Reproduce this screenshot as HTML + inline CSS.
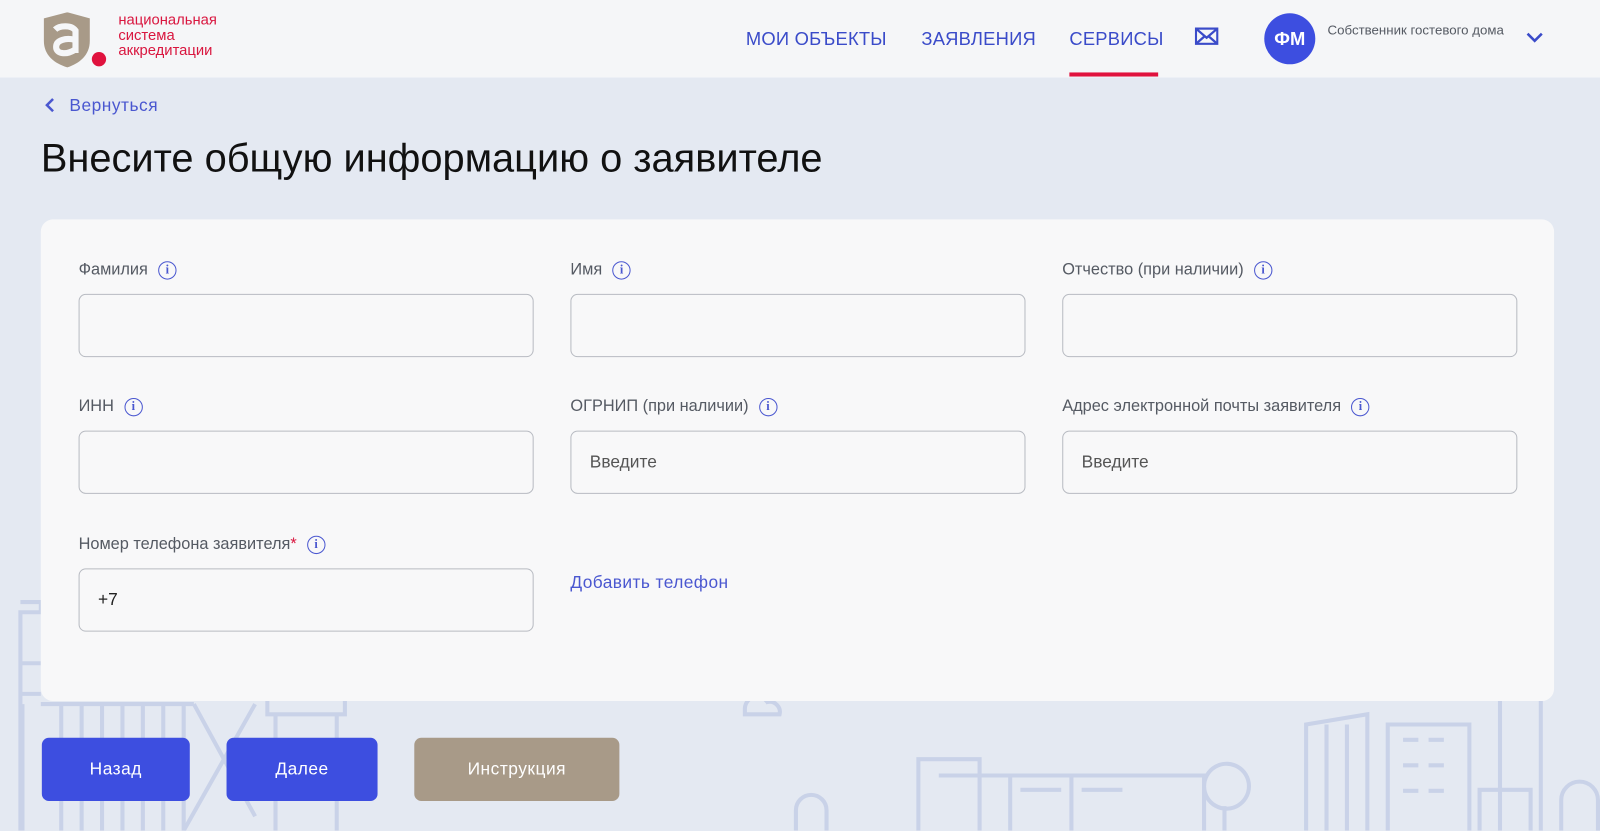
<!DOCTYPE html>
<html><head><meta charset="utf-8">
<style>
*{box-sizing:border-box;margin:0;padding:0}
body{width:1600px;height:814px;overflow:hidden;background:#e4e9f2;font-family:"Liberation Sans",sans-serif;position:relative}
#w{position:absolute;left:0;top:0;width:1568px;height:798px;transform:scale(1.0204);transform-origin:0 0}
.hdr{position:absolute;left:0;top:0;width:1600px;height:76px;background:#f5f6f8}
.nav{position:absolute;top:28px;font-size:18px;color:#3a4bc9;letter-spacing:.2px}
.card{position:absolute;left:40px;top:215px;width:1483px;height:472px;background:#f8f8f9;border-radius:12px}
.lbl{position:absolute;font-size:16px;color:#555a63}
.ic{display:inline-block;width:18px;height:18px;border:1.5px solid #4a57d0;border-radius:50%;color:#4a57d0;font-size:12px;font-weight:bold;text-align:center;line-height:15px;vertical-align:1px;margin-left:10px;font-family:"Liberation Serif",serif}
.inp{position:absolute;width:446px;height:62px;border:1px solid #b8bbc2;border-radius:7px;background:#f8f8f9;font-size:17px;color:#555;padding:20px 18px}
.btn{position:absolute;top:723px;height:62px;border-radius:7px;color:#fff;font-size:17px;text-align:center;line-height:62px;letter-spacing:.5px}
</style></head><body><div id="w">
<svg style="position:absolute;left:0;top:560px" width="1600" height="254" fill="none" stroke="#c9d2e8" stroke-width="4">
<path d="M20 254V40h20V30h-20M20 90h20M20 120h20M22 254V130"/>
<path d="M40 130h150M60 130v124M80 130v124M100 130v124M120 130v124M140 130v124M160 130v124M180 130v124"/>
<path d="M190 130l60 110M180 254L250 130"/>
<path d="M270 254V140h60v114M262 140h76v-15h-76z M300 125v-15"/>
<path d="M730 134a12 12 0 0 1 22-6a10 10 0 0 1 12 12h-34z"/>
<path d="M780 254v-20a15 15 0 0 1 30 0v20"/>
<path d="M900 254v-70h60v70M920 200h260v54M990 200v54M1050 200v54M1000 214h40M1060 214h40"/>
<path d="M1180 210a22 22 0 1 1 0 1M1200 230v24"/>
<path d="M1280 254V150l60-10v114M1300 150v104M1320 150v104"/>
<path d="M1360 254V150h80v104M1375 165h15M1400 165h15M1375 190h15M1400 190h15M1375 215h15M1400 215h15"/>
<path d="M1450 254v-40h50v40M1470 254V100h40v154"/>
<path d="M1530 254v-30a18 18 0 0 1 36 0v30"/>
</svg>
<div class="hdr">
<svg style="position:absolute;left:40px;top:12px" width="66" height="56" viewBox="0 0 66 56">
<path d="M3 6L26 0l22 6v22c0 14-10 22-22 26C13 50 3 42 3 28z" fill="#a89a88"/>
<path d="M14 17c4-4 16-5 20 1v22M33 27c-8-2-18 0-18 7s10 8 18 3" stroke="#f5f6f8" stroke-width="6" fill="none"/>
<circle cx="57" cy="46" r="7" fill="#e0123e"/>
</svg>
<div style="position:absolute;left:116px;top:13px;font-size:14.5px;line-height:15px;color:#d9163f">национальная<br>система<br>аккредитации</div>
<div class="nav" style="left:731px">МОИ ОБЪЕКТЫ</div>
<div class="nav" style="left:903px">ЗАЯВЛЕНИЯ</div>
<div class="nav" style="left:1048px">СЕРВИСЫ</div>
<div style="position:absolute;left:1048px;top:71px;width:87px;height:4px;background:#e0123e"></div>
<svg style="position:absolute;left:1171px;top:27px" width="23" height="17" viewBox="0 0 23 17" fill="none" stroke="#3a4bc9" stroke-width="2.2"><rect x="1" y="1" width="21" height="15"/><path d="M1 1l10.5 9L22 1M1 16l8-7M22 16l-8-7"/></svg>
<div style="position:absolute;left:1239px;top:13px;width:50px;height:50px;border-radius:50%;background:#3d4ee0;color:#fff;font-weight:bold;font-size:18px;text-align:center;line-height:50px">ФМ</div>
<div style="position:absolute;left:1301px;top:22px;font-size:13px;color:#555a63">Собственник гостевого дома</div>
<svg style="position:absolute;left:1495px;top:31px" width="18" height="12" fill="none" stroke="#3a4bc9" stroke-width="2.5"><path d="M2 2l7 7 7-7"/></svg>
</div>
<svg style="position:absolute;left:43px;top:95px" width="12" height="16" fill="none" stroke="#4a57d0" stroke-width="2.5"><path d="M9 2L3 8l6 6"/></svg>
<div style="position:absolute;left:68px;top:94px;font-size:17px;color:#4a57d0;letter-spacing:.5px">Вернуться</div>
<div style="position:absolute;left:40px;top:134px;font-size:39px;color:#111">Внесите общую информацию о заявителе</div>
<div class="card"></div>
<div class="lbl" style="left:77px;top:256px">Фамилия<span class="ic">i</span></div>
<div class="lbl" style="left:559px;top:256px">Имя<span class="ic">i</span></div>
<div class="lbl" style="left:1041px;top:256px">Отчество (при наличии)<span class="ic">i</span></div>
<div class="inp" style="left:77px;top:288px"></div>
<div class="inp" style="left:559px;top:288px"></div>
<div class="inp" style="left:1041px;top:288px"></div>
<div class="lbl" style="left:77px;top:390px">ИНН<span class="ic">i</span></div>
<div class="lbl" style="left:559px;top:390px">ОГРНИП (при наличии)<span class="ic">i</span></div>
<div class="lbl" style="left:1041px;top:390px">Адрес электронной почты заявителя<span class="ic">i</span></div>
<div class="inp" style="left:77px;top:422px"></div>
<div class="inp" style="left:559px;top:422px">Введите</div>
<div class="inp" style="left:1041px;top:422px">Введите</div>
<div class="lbl" style="left:77px;top:525px">Номер телефона заявителя<span style="color:#d9163f">*</span><span class="ic">i</span></div>
<div class="inp" style="left:77px;top:557px;color:#222">+7</div>
<div style="position:absolute;left:559px;top:561px;font-size:17px;color:#4a57d0;letter-spacing:.4px">Добавить телефон</div>
<div class="btn" style="left:41px;width:145px;background:#3d4ee0">Назад</div>
<div class="btn" style="left:222px;width:148px;background:#3d4ee0">Далее</div>
<div class="btn" style="left:406px;width:201px;background:#a89a88">Инструкция</div>
</div></body></html>
